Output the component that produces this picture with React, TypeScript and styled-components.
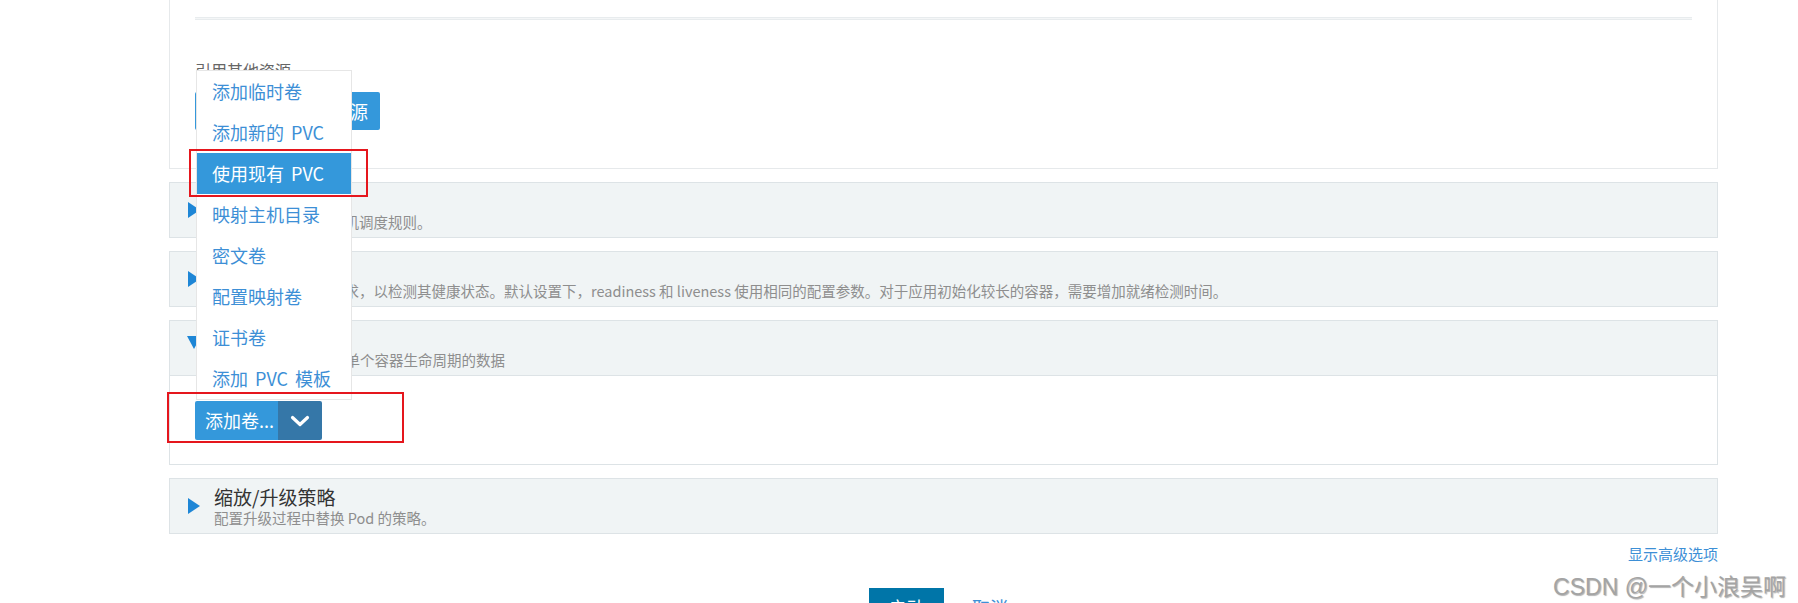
import styled, { createGlobalStyle } from "styled-components";

const GlobalStyle = createGlobalStyle`
  html, body {
    margin: 0;
    padding: 0;
    background: #fff;
    font-family: "Noto Sans CJK SC", "Liberation Sans", sans-serif;
    overflow: hidden;
  }
`;

const Page = styled.div`
  position: relative;
  width: 1798px;
  height: 603px;
  overflow: hidden;
`;

const Content = styled.div`
  width: 1549px;
  margin-left: 169px;
  display: flex;
  flex-direction: column;
`;

const TopCard = styled.div`
  box-sizing: border-box;
  height: 169px;
  border: 1px solid #e6e9eb;
  border-top: none;
  padding: 17px 25px 0 25px;
  margin-bottom: 13px;
`;

const Divider = styled.div`
  height: 3px;
  border-top: 1px solid #e8ecee;
  border-bottom: 1px solid #e8ecee;
  background: #f4f6f7;
  box-sizing: border-box;
`;

const FieldLabel = styled.div`
  margin-top: 40px;
  font-size: 16px;
  line-height: 20px;
  color: #666;
`;

const Button = styled.button`
  display: block;
  width: 185px;
  height: 38px;
  border: none;
  border-radius: 2px;
  background: #3498db;
  color: #fff;
  font-family: inherit;
  font-size: 18px;
  padding: 0 12px;
  margin-top: 12px;
  text-align: right;
`;

const Panel = styled.div`
  border: 1px solid #dde3e6;
  margin-bottom: 13px;
`;

const PanelHeader = styled.div`
  box-sizing: border-box;
  height: 54px;
  background: #f0f4f5;
  display: flex;
  align-items: center;
  padding: 0 0 0 18px;
`;

const Arrow = styled.div<{ $open?: boolean }>`
  width: 0;
  height: 0;
  margin-right: 14px;
  ${({ $open }) =>
    $open
      ? `border-left: 7px solid transparent;
         border-right: 7px solid transparent;
         border-top: 13px solid #1e86d6;
         margin-left: -1px;
         margin-top: -12px;`
      : `border-top: 8px solid transparent;
         border-bottom: 8px solid transparent;
         border-left: 12px solid #1e86d6;`}
`;

const HeaderText = styled.div`
  display: flex;
  flex-direction: column;
`;

const Title = styled.div`
  font-size: 19px;
  line-height: 22px;
  color: #333;
`;

const Desc = styled.div`
  font-size: 14.5px;
  line-height: 19px;
  color: #8e8e8e;
  white-space: nowrap;
`;

const PanelBody = styled.div`
  height: 89px;
  border-top: 1px solid #dde3e6;
  padding: 25px 0 0 25px;
  box-sizing: border-box;
`;

const SplitWrap = styled.div`
  position: relative;
  display: inline-flex;
`;

const SplitMain = styled.div`
  box-sizing: border-box;
  height: 39px;
  width: 83px;
  background: #3498db;
  color: #fff;
  font-size: 18px;
  line-height: 39px;
  padding-left: 10px;
  border-radius: 2px 0 0 2px;
  white-space: nowrap;
  overflow: hidden;
`;

const SplitCaret = styled.div`
  width: 44px;
  height: 39px;
  background: #3577a8;
  display: flex;
  align-items: center;
  justify-content: center;
  border-radius: 0 2px 2px 0;
`;

const Menu = styled.ul`
  position: absolute;
  left: 1px;
  bottom: 40px;
  width: 156px;
  margin: 0;
  padding: 0;
  list-style: none;
  background: #fff;
  border: 1px solid #e6e6e6;
  box-sizing: border-box;
  z-index: 5;
`;

const MenuItem = styled.li<{ $active?: boolean }>`
  position: relative;
  height: 41px;
  line-height: 41px;
  padding-left: 15px;
  font-size: 18px;
  white-space: nowrap;
  word-spacing: 3px;
  color: ${({ $active }) => ($active ? "#fff" : "#3d8fd6")};
  background: ${({ $active }) => ($active ? "#3498db" : "#fff")};
`;

const RedBox = styled.div<{ $t: number; $l: number; $r: number; $b: number }>`
  position: absolute;
  top: ${({ $t }) => $t}px;
  left: ${({ $l }) => $l}px;
  right: ${({ $r }) => $r}px;
  bottom: ${({ $b }) => $b}px;
  border: 2px solid #e5161d;
  pointer-events: none;
  z-index: 6;
`;

const AdvancedLink = styled.div`
  align-self: flex-end;
  margin-top: -3px;
  font-size: 15px;
  line-height: 20px;
  color: #3d8fd6;
`;

const Actions = styled.div`
  display: flex;
  justify-content: center;
  align-items: center;
  gap: 28px;
  margin-top: 24px;
  padding-right: 10px;
`;

const PrimaryButton = styled.div`
  width: 75px;
  height: 38px;
  background: #0075a8;
  color: #fff;
  font-size: 18px;
  line-height: 38px;
  text-align: center;
`;

const CancelLink = styled.div`
  font-size: 18px;
  color: #3d8fd6;
`;

const Watermark = styled.div`
  position: absolute;
  right: 12px;
  top: 568px;
  font-family: "Liberation Sans", "Noto Sans CJK SC", sans-serif;
  font-size: 23px;
  color: #a4a4a4;
  text-shadow: 1px 1px 1px rgba(0, 0, 0, 0.3);
`;

const Chevron = () => (
  <svg width="20" height="12" viewBox="0 0 20 12">
    <path d="M2.5 2.5 L10 9.5 L17.5 2.5" fill="none" stroke="#fff" strokeWidth="3.2" strokeLinecap="round" strokeLinejoin="round" />
  </svg>
);

const menuItems = [
  "添加临时卷",
  "添加新的 PVC",
  "使用现有 PVC",
  "映射主机目录",
  "密文卷",
  "配置映射卷",
  "证书卷",
  "添加 PVC 模板",
];

const App = () => {
  return (
    <Page>
      <GlobalStyle />
      <Content>
        <TopCard>
          <Divider />
          <FieldLabel>引用其他资源</FieldLabel>
          <Button>添加引用其他资源</Button>
        </TopCard>

        <Panel>
          <PanelHeader>
            <Arrow />
            <HeaderText>
              <Title>主机调度</Title>
              <Desc>配置此工作负载的主机调度规则。</Desc>
            </HeaderText>
          </PanelHeader>
        </Panel>

        <Panel>
          <PanelHeader>
            <Arrow />
            <HeaderText>
              <Title>健康检查</Title>
              <Desc>
                定期向容器组发送请求，以检测其健康状态。默认设置下，readiness 和 liveness 使用相同的配置参数。对于应用初始化较长的容器，需要增加就绪检测时间。
              </Desc>
            </HeaderText>
          </PanelHeader>
        </Panel>

        <Panel>
          <PanelHeader>
            <Arrow $open />
            <HeaderText>
              <Title>数据卷</Title>
              <Desc>用于持久化存储超出单个容器生命周期的数据</Desc>
            </HeaderText>
          </PanelHeader>
          <PanelBody>
            <SplitWrap>
              <Menu>
                {menuItems.map((item, i) => (
                  <MenuItem key={item} $active={i === 2}>
                    {item}
                    {i === 2 && <RedBox $t={-4} $l={-8} $r={-17} $b={-3} />}
                  </MenuItem>
                ))}
              </Menu>
              <SplitMain>添加卷...</SplitMain>
              <SplitCaret>
                <Chevron />
              </SplitCaret>
              <RedBox $t={-9} $l={-28} $r={-82} $b={-3} />
            </SplitWrap>
          </PanelBody>
        </Panel>

        <Panel>
          <PanelHeader>
            <Arrow />
            <HeaderText>
              <Title>缩放/升级策略</Title>
              <Desc>配置升级过程中替换 Pod 的策略。</Desc>
            </HeaderText>
          </PanelHeader>
        </Panel>

        <AdvancedLink>显示高级选项</AdvancedLink>

        <Actions>
          <PrimaryButton>启动</PrimaryButton>
          <CancelLink>取消</CancelLink>
        </Actions>
      </Content>
      <Watermark>CSDN @一个小浪吴啊</Watermark>
    </Page>
  );
};

export default App;
